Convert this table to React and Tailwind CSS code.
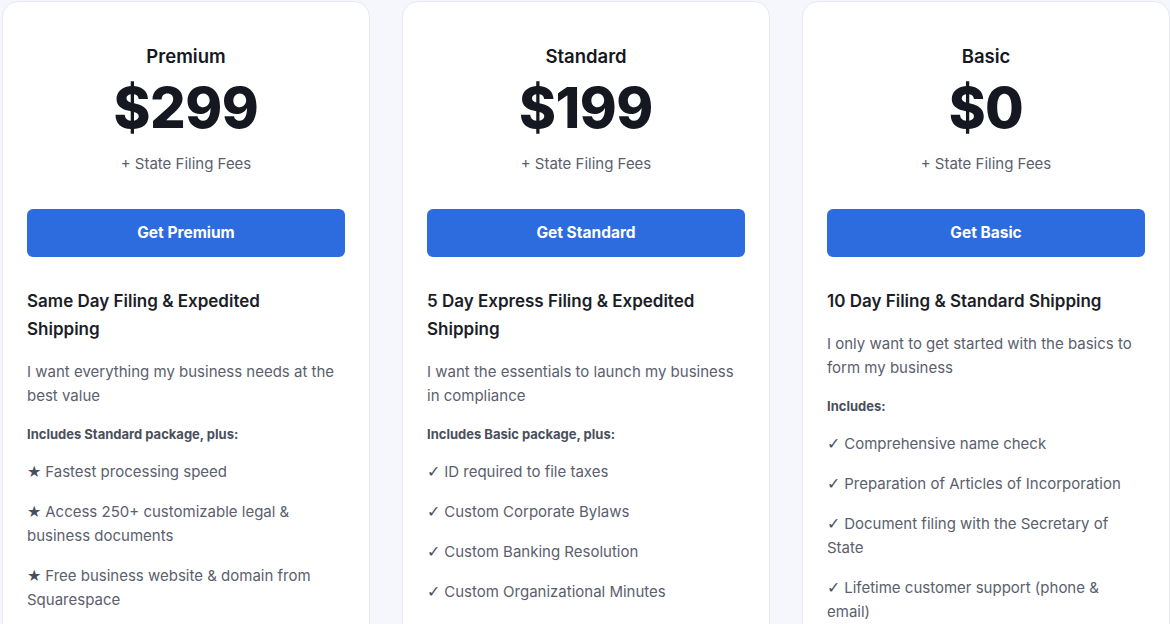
const plans = [
  {
    name: 'Premium',
    price: '$299',
    cta: 'Get Premium',
    heading: 'Same Day Filing & Expedited Shipping',
    desc: 'I want everything my business needs at the best value',
    includes: 'Includes Standard package, plus:',
    mark: '★',
    items: [
      'Fastest processing speed',
      'Access 250+ customizable legal & business documents',
      'Free business website & domain from Squarespace',
      'Expert guidance from attorneys',
    ],
  },
  {
    name: 'Standard',
    price: '$199',
    cta: 'Get Standard',
    heading: '5 Day Express Filing & Expedited Shipping',
    desc: 'I want the essentials to launch my business in compliance',
    includes: 'Includes Basic package, plus:',
    mark: '✓',
    items: [
      'ID required to file taxes',
      'Custom Corporate Bylaws',
      'Custom Banking Resolution',
      'Custom Organizational Minutes',
      'Digital access to documents',
    ],
  },
  {
    name: 'Basic',
    price: '$0',
    cta: 'Get Basic',
    heading: '10 Day Filing & Standard Shipping',
    desc: 'I only want to get started with the basics to form my business',
    includes: 'Includes:',
    mark: '✓',
    items: [
      'Comprehensive name check',
      'Preparation of Articles of Incorporation',
      'Document filing with the Secretary of State',
      'Lifetime customer support (phone & email)',
    ],
  },
];

function PlanCard({ plan }) {
  return (
    <div className="bg-white border border-[#e6e8f3] rounded-2xl px-6 pt-10 pb-10 min-h-[700px]">
      <div className="text-center">
        <h3 className="text-[18.5px] leading-7 font-semibold text-[#151821]">{plan.name}</h3>
        <div className="mt-2 text-[56px] leading-[60px] font-extrabold tracking-[-0.5px] text-[#151821]">
          {plan.price}
        </div>
        <p className="mt-[14px] text-[15px] leading-6 text-[#5b606d]">+ State Filing Fees</p>
      </div>
      <button className="mt-[33px] w-full h-12 rounded-md bg-[#2d6cdf] text-white text-[15.5px] font-bold">
        {plan.cta}
      </button>
      <h4 className="mt-[30px] text-[17px] leading-7 font-semibold text-[#1b1e27] pr-6">{plan.heading}</h4>
      <p className="mt-[17px] text-[15px] leading-6 text-[#5b606d] pr-2">{plan.desc}</p>
      <p className="mt-4 text-[13px] leading-5 font-bold text-[#4a4f5c]">{plan.includes}</p>
      <ul className="mt-4 flex flex-col gap-4">
        {plan.items.map((item) => (
          <li key={item} className="text-[15px] leading-6 text-[#5b606d] pr-4">
            <span className="inline-block leading-none font-['DejaVu_Sans',sans-serif] text-[16px] font-light text-[#4a4f5c]">
              {plan.mark}
            </span>{' '}
            {item}
          </li>
        ))}
      </ul>
    </div>
  );
}

export default function App() {
  return (
    <div className="h-[624px] w-[1170px] overflow-hidden bg-[#f6f7fc] font-['Inter',sans-serif]">
      <div className="grid grid-cols-3 gap-8 pl-[2px] pt-[1px]">
        {plans.map((p) => (
          <PlanCard key={p.name} plan={p} />
        ))}
      </div>
    </div>
  );
}
